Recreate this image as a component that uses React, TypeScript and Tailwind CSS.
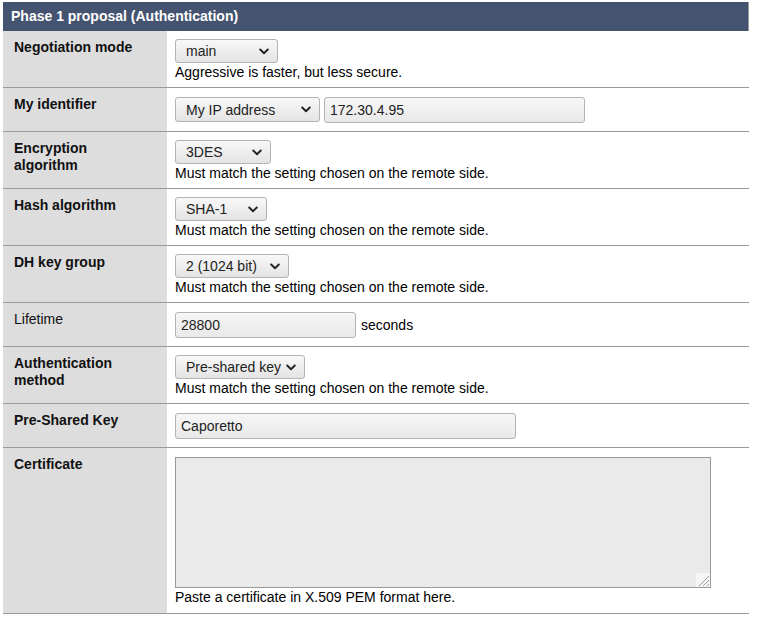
import React from "react";

const Chevron = () => (
  <svg width="10" height="7" viewBox="0 0 10 7" className="shrink-0">
    <path d="M1.2 1.5 L5 5.2 L8.8 1.5" fill="none" stroke="#222" strokeWidth="1.9" strokeLinecap="round" strokeLinejoin="round" />
  </svg>
);

const Select = ({ label, w, h = "h-[24px]" }: { label: string; w: string; h?: string }) => (
  <div
    className={`${w} ${h} flex items-center justify-between gap-[3px] pl-[10px] pr-[8px] rounded-[3px] border border-[#b3b3b3] bg-gradient-to-b from-[#f8f8f8] to-[#e4e4e4] text-[14px] text-[#222] leading-none whitespace-nowrap`}
  >
    <span>{label}</span>
    <Chevron />
  </div>
);

const Input = ({ value, w }: { value: string; w: string }) => (
  <div
    className={`${w} h-[26px] flex items-center pl-[5px] rounded-[3px] border border-[#b3b3b3] bg-gradient-to-b from-[#f6f6f6] to-[#e9e9e9] text-[14px] text-[#222] leading-none`}
  >
    {value}
  </div>
);

const Help = ({ children }: { children: React.ReactNode }) => (
  <div className="text-[14px] leading-[19px] text-black">{children}</div>
);

const Row = ({
  label,
  bold = true,
  children,
  cls,
}: {
  label: React.ReactNode;
  bold?: boolean;
  children: React.ReactNode;
  cls: string;
}) => (
  <div className="flex border-b border-[#9a9a9a]">
    <div
      className={`w-[164px] shrink-0 bg-[#dddddd] pl-[11px] pr-[6px] pt-[8px] text-[14px] leading-[17px] text-[#111] ${
        bold ? "font-bold" : "font-normal"
      }`}
    >
      {label}
    </div>
    <div className={`flex-1 pl-[8px] ${cls}`}>{children}</div>
  </div>
);

export default function App() {
  return (
    <div
      className="pl-[3px] pt-[2px] w-[749px] bg-white"
      style={{ fontFamily: '"Liberation Sans", Arial, sans-serif' }}
    >
      <div className="h-[29px] bg-[#445370] border-r border-[#999] flex items-center pl-[8px] text-white font-bold text-[14px]">
        Phase 1 proposal (Authentication)
      </div>

      <Row label="Negotiation mode" cls="pt-[8px] pb-[5px]">
        <Select label="main" w="w-[103px]" />
        <Help>Aggressive is faster, but less secure.</Help>
      </Row>

      <Row label="My identifier" cls="pt-[9px] pb-[8px]">
        <div className="flex gap-[4px]">
          <Select label="My IP address" w="w-[145px]" h="h-[25px]" />
          <Input value="172.30.4.95" w="w-[261px]" />
        </div>
      </Row>

      <Row label={<>Encryption<br />algorithm</>} cls="pt-[8px] pb-[5px]">
        <Select label="3DES" w="w-[96px]" />
        <Help>Must match the setting chosen on the remote side.</Help>
      </Row>

      <Row label="Hash algorithm" cls="pt-[8px] pb-[5px]">
        <Select label="SHA-1" w="w-[92px]" />
        <Help>Must match the setting chosen on the remote side.</Help>
      </Row>

      <Row label="DH key group" cls="pt-[8px] pb-[5px]">
        <Select label="2 (1024 bit)" w="w-[114px]" />
        <Help>Must match the setting chosen on the remote side.</Help>
      </Row>

      <Row label="Lifetime" bold={false} cls="pt-[9px] pb-[8px]">
        <div className="flex items-center gap-[5px]">
          <Input value="28800" w="w-[181px]" />
          <span className="text-[14px] text-black">seconds</span>
        </div>
      </Row>

      <Row label={<>Authentication<br />method</>} cls="pt-[8px] pb-[5px]">
        <Select label="Pre-shared key" w="w-[130px]" />
        <Help>Must match the setting chosen on the remote side.</Help>
      </Row>

      <Row label="Pre-Shared Key" cls="pt-[9px] pb-[8px]">
        <Input value="Caporetto" w="w-[341px]" />
      </Row>

      <Row label="Certificate" cls="pt-[9px] pb-[6px]">
        <div className="relative w-[536px] h-[131px]">
          <textarea
            readOnly
            className="block w-full h-full bg-[#eaeaea] border border-[#999] outline-none resize-none"
          />
          <svg
            width="14"
            height="14"
            viewBox="0 0 14 14"
            className="absolute right-[1px] bottom-[1px]"
          >
            <rect x="0" y="0" width="14" height="14" fill="#f5f5f5" />
            <path d="M13 3 L3 13 M13 7 L7 13 M13 11 L11 13" stroke="#a0a0a0" strokeWidth="1" />
          </svg>
        </div>
        <Help>Paste a certificate in X.509 PEM format here.</Help>
      </Row>
    </div>
  );
}
